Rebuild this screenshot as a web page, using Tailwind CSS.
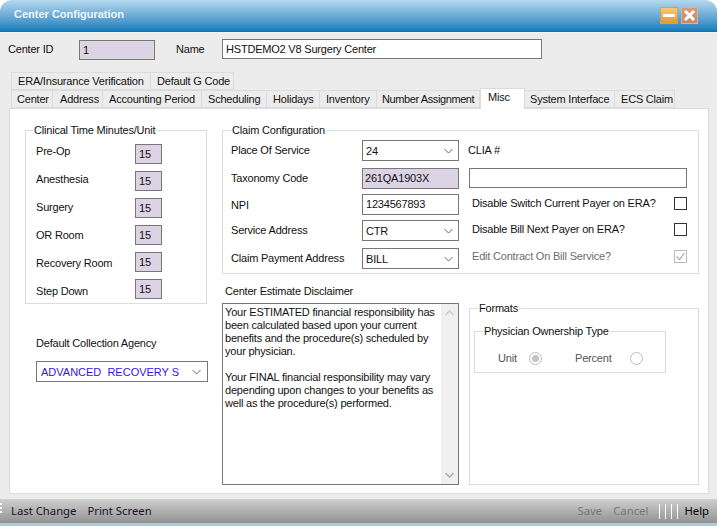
<!DOCTYPE html>
<html>
    <head>
        <meta charset="UTF-8" />
        <script src="https://cdn.jsdelivr.net/npm/@tailwindcss/browser@4"></script>
        <title>Center Configuration</title>
    </head>
    <body class="m-0 w-[718px] h-[526px] overflow-hidden bg-white font-['Liberation_Sans',sans-serif] text-[11px] tracking-[-0.2px] leading-[14px] text-[#111]">
        <div class="flex flex-col w-[717px] h-[526px] bg-[#ececec] rounded-t-[12px] overflow-hidden">
            <!-- title bar -->
            <div class="flex items-start justify-between h-[32px] bg-gradient-to-b from-[#b4d9ee] to-[#0b7dbd] border-b border-[#0a76b4] pl-[14px] pr-[19px] pt-[7px]">
                <span class="font-bold text-[11px] tracking-normal text-[#eef6fb]">Center Configuration</span>
                <div class="flex gap-[3px]">
                    <div class="flex items-center justify-center w-[18px] h-[17px] bg-gradient-to-b from-[#f5c878] to-[#e09a2c] border border-[#c9a468]">
                        <div class="w-[12px] h-[3px] bg-white"></div>
                    </div>
                    <div class="flex items-center justify-center w-[17px] h-[17px] bg-gradient-to-b from-[#d89a78] to-[#c98a62] border border-[#c8b8ac]">
                        <svg width="13" height="13" viewBox="0 0 13 13"><path d="M2 2 L11 11 M11 2 L2 11" stroke="#fff" stroke-width="3" fill="none" /></svg>
                    </div>
                </div>
            </div>

            <div class="flex-1 border-t border-[#f4f4f4]">
                <!-- id and name -->
                <div class="flex items-start h-[39px] pl-[8px] pt-[6px] whitespace-nowrap">
                    <span class="w-[71px] mt-[3px]">Center ID</span>
                    <div class="w-[76px] h-[20px] mt-[1px] pl-[3px] leading-[18px] bg-[#dcd4e4] border border-[#777] outline outline-1 -outline-offset-2 outline-[#ddd]">1</div>
                    <span class="ml-[21px] w-[46px] mt-[3px]">Name</span>
                    <div class="w-[320px] h-[20px] pl-[3px] leading-[18px] bg-white border border-[#777]">HSTDEMO2 V8 Surgery Center</div>
                </div>

                <!-- tabs -->
                <div class="flex ml-[11px] h-[18px] whitespace-nowrap">
                    <div class="w-[140px] border border-[#dcdcdc] pl-[6px] leading-[17px]">ERA/Insurance Verification</div>
                    <div class="w-[83px] border border-l-0 border-[#dcdcdc] pl-[6px] leading-[17px]">Default G Code</div>
                </div>
                <div class="relative z-10 flex items-end ml-[11px] h-[18px] whitespace-nowrap">
                    <div class="w-[42px] h-[18px] border border-[#dcdcdc] pl-[5px] leading-[17px]">Center</div>
                    <div class="w-[50px] h-[18px] border border-l-0 border-[#dcdcdc] pl-[7px] leading-[17px]">Address</div>
                    <div class="w-[99px] h-[18px] border border-l-0 border-[#dcdcdc] pl-[6px] leading-[17px]">Accounting Period</div>
                    <div class="w-[65px] h-[18px] border border-l-0 border-[#dcdcdc] pl-[6px] leading-[17px]">Scheduling</div>
                    <div class="w-[53px] h-[18px] border border-l-0 border-[#dcdcdc] pl-[6px] leading-[17px]">Holidays</div>
                    <div class="w-[57px] h-[18px] border border-l-0 border-[#dcdcdc] pl-[6px] leading-[17px]">Inventory</div>
                    <div class="w-[103px] h-[18px] border border-l-0 border-[#dcdcdc] pl-[5px] tracking-[-0.4px] leading-[17px]">Number Assignment</div>
                    <div class="w-[45px] h-[21px] -mb-[1px] border border-b-0 border-[#dcdcdc] bg-white pl-[7px] leading-[16px]">Misc</div>
                    <div class="w-[90px] h-[18px] border border-l-0 border-[#dcdcdc] pl-[5px] leading-[17px]">System Interface</div>
                    <div class="w-[60px] h-[18px] border border-l-0 border-[#dcdcdc] pl-[6px] leading-[17px]">ECS Claim</div>
                </div>

                <!-- tab panel -->
                <div class="flex ml-[9px] w-[700px] h-[386px] bg-white border border-[#dcdcdc] pl-[15px] pt-[21px]">
                    <!-- left column -->
                    <div class="w-[197px]">
                        <div class="relative flex w-[182px] h-[174px] border border-[#dcdcdc] pl-[10px] pt-[13px] whitespace-nowrap">
                            <span class="absolute -top-[8px] left-[7px] bg-white px-[1px]">Clinical Time Minutes/Unit</span>
                            <div class="flex flex-col gap-[14px] w-[99px]">
                                <span>Pre-Op</span>
                                <span>Anesthesia</span>
                                <span>Surgery</span>
                                <span>OR Room</span>
                                <span>Recovery Room</span>
                                <span>Step Down</span>
                            </div>
                            <div class="flex flex-col gap-[7px]">
                                <div class="w-[27px] h-[20px] pl-[3px] leading-[18px] bg-[#dcd4e4] border border-[#777]">15</div>
                                <div class="w-[27px] h-[20px] pl-[3px] leading-[18px] bg-[#dcd4e4] border border-[#777]">15</div>
                                <div class="w-[27px] h-[20px] pl-[3px] leading-[18px] bg-[#dcd4e4] border border-[#777]">15</div>
                                <div class="w-[27px] h-[20px] pl-[3px] leading-[18px] bg-[#dcd4e4] border border-[#777]">15</div>
                                <div class="w-[27px] h-[20px] pl-[3px] leading-[18px] bg-[#dcd4e4] border border-[#777]">15</div>
                                <div class="w-[27px] h-[20px] pl-[3px] leading-[18px] bg-[#dcd4e4] border border-[#777]">15</div>
                            </div>
                        </div>
                        <div class="ml-[11px] mt-[32px] whitespace-nowrap">Default Collection Agency</div>
                        <div class="flex items-center justify-between w-[172px] h-[21px] ml-[11px] mt-[11px] pl-[4px] pr-[6px] border border-[#777] text-[#3a10f0]">
                            <span class="tracking-normal whitespace-pre">ADVANCED  RECOVERY S</span>
                            <svg width="9" height="6" viewBox="0 0 9 6"><path d="M0.5 1 L4.5 5 L8.5 1" stroke="#666" fill="none" /></svg>
                        </div>
                    </div>

                    <!-- right column -->
                    <div class="w-[477px]">
                        <div class="relative flex w-[477px] h-[144px] border border-[#dcdcdc] pl-[8px] whitespace-nowrap">
                            <span class="absolute -top-[8px] left-[8px] bg-white px-[1px]">Claim Configuration</span>
                            <div class="flex flex-col w-[131px] pt-[12px]">
                                <span>Place Of Service</span>
                                <span class="mt-[14px]">Taxonomy Code</span>
                                <span class="mt-[13px]">NPI</span>
                                <span class="mt-[11px]">Service Address</span>
                                <span class="mt-[14px]">Claim Payment Address</span>
                            </div>
                            <div class="flex flex-col w-[106px] pt-[9px]">
                                <div class="flex items-center justify-between w-[97px] h-[21px] pl-[3px] pr-[5px] border border-[#777]">
                                    <span>24</span>
                                    <svg width="9" height="6" viewBox="0 0 9 6"><path d="M0.5 1 L4.5 5 L8.5 1" stroke="#666" fill="none" /></svg>
                                </div>
                                <div class="w-[97px] h-[21px] mt-[7px] pl-[2px] leading-[19px] bg-[#dcd4e4] border border-[#777]">261QA1903X</div>
                                <div class="w-[97px] h-[21px] mt-[5px] pl-[3px] leading-[18px] border border-[#777]">1234567893</div>
                                <div class="flex items-center justify-between w-[97px] h-[21px] mt-[5px] pl-[3px] pr-[5px] border border-[#777]">
                                    <span>CTR</span>
                                    <svg width="9" height="6" viewBox="0 0 9 6"><path d="M0.5 1 L4.5 5 L8.5 1" stroke="#666" fill="none" /></svg>
                                </div>
                                <div class="flex items-center justify-between w-[97px] h-[21px] mt-[7px] pl-[3px] pr-[5px] border border-[#777]">
                                    <span>BILL</span>
                                    <svg width="9" height="6" viewBox="0 0 9 6"><path d="M0.5 1 L4.5 5 L8.5 1" stroke="#666" fill="none" /></svg>
                                </div>
                            </div>
                            <div class="flex flex-col w-[219px] pt-[12px]">
                                <span>CLIA #</span>
                                <div class="w-[218px] h-[20px] ml-[1px] mt-[11px] border border-[#777]"></div>
                                <div class="flex items-center justify-between h-[14px] mt-[8px] ml-[4px]">
                                    <span>Disable Switch Current Payer on ERA?</span>
                                    <div class="w-[13px] h-[13px] border border-[#333]"></div>
                                </div>
                                <div class="flex items-center justify-between h-[14px] mt-[12px] ml-[4px]">
                                    <span>Disable Bill Next Payer on ERA?</span>
                                    <div class="w-[13px] h-[13px] border border-[#333]"></div>
                                </div>
                                <div class="flex items-center justify-between h-[14px] mt-[13px] ml-[4px] text-[#6d6d6d]">
                                    <span>Edit Contract On Bill Service?</span>
                                    <div class="flex items-center justify-center w-[13px] h-[13px] border border-[#bbb]">
                                        <svg width="11" height="11" viewBox="0 0 11 11"><path d="M1.5 5.5 L4.5 8.5 L9.5 2" stroke="#aaa" stroke-width="1.2" fill="none" /></svg>
                                    </div>
                                </div>
                            </div>
                        </div>

                        <div class="flex mt-[10px]">
                            <div class="w-[247px]">
                                <div class="ml-[3px] whitespace-nowrap">Center Estimate Disclaimer</div>
                                <div class="flex w-[237px] h-[182px] mt-[5px] border border-[#777]">
                                    <div class="w-[218px] pl-[2px] pt-[2px] leading-[13px]">
                                        <p>Your ESTIMATED financial responsibility has been calculated based upon your current benefits and the procedure(s) scheduled by your physician.</p>
                                        <p class="mt-[13px]">Your FINAL financial responsibility may vary depending upon changes to your benefits as well as the procedure(s) performed.</p>
                                    </div>
                                    <div class="flex-1 flex flex-col items-center justify-between pt-[6px] pb-[6px] bg-[#f0f0f0]">
                                        <svg width="9" height="6" viewBox="0 0 9 6"><path d="M0.5 5 L4.5 1 L8.5 5" stroke="#ccc" stroke-width="1.5" fill="none" /></svg>
                                        <svg width="9" height="6" viewBox="0 0 9 6"><path d="M0.5 1 L4.5 5 L8.5 1" stroke="#aaa" stroke-width="1.5" fill="none" /></svg>
                                    </div>
                                </div>
                            </div>
                            <div class="relative w-[230px] h-[177px] mt-[24px] border border-[#dcdcdc] pl-[4px] pt-[22px] whitespace-nowrap">
                                <span class="absolute -top-[8px] left-[8px] bg-white px-[1px]">Formats</span>
                                <div class="relative flex items-center w-[192px] h-[42px] border border-[#dcdcdc] pt-[12px] text-[#555]">
                                    <span class="absolute -top-[8px] left-[8px] bg-white px-[1px] text-[#111]">Physician Ownership Type</span>
                                    <span class="ml-[23px] w-[31px]">Unit</span>
                                    <div class="flex items-center justify-center w-[13px] h-[13px] rounded-full border border-[#bbb]">
                                        <div class="w-[7px] h-[7px] rounded-full bg-[#c4c4c4]"></div>
                                    </div>
                                    <span class="ml-[33px] w-[55px]">Percent</span>
                                    <div class="w-[13px] h-[13px] rounded-full border border-[#bbb]"></div>
                                </div>
                            </div>
                        </div>
                    </div>
                </div>
            </div>

            <!-- footer -->
            <div class="relative flex items-center justify-between h-[24px] bg-gradient-to-b from-[#d0d0d0] to-[#929292] font-['Noto_Sans',sans-serif] text-[11.3px] tracking-normal whitespace-nowrap pl-[11px] pr-[8px] text-[#22102a]">
                <div class="absolute left-0 top-[4px] flex flex-col gap-[2px]">
                    <div class="w-[2px] h-[2px] bg-white"></div>
                    <div class="w-[2px] h-[2px] bg-white"></div>
                    <div class="w-[2px] h-[2px] bg-white"></div>
                </div>
                <div class="flex gap-[11px]">
                    <span>Last Change</span>
                    <span>Print Screen</span>
                </div>
                <div class="flex items-center">
                    <span class="text-[#777]">Save</span>
                    <span class="ml-[11px] text-[#777]">Cancel</span>
                    <div class="flex gap-[5px] ml-[11px] h-[15px]">
                        <div class="w-[1px] bg-white"></div>
                        <div class="w-[1px] bg-white"></div>
                        <div class="w-[1px] bg-white"></div>
                        <div class="w-[1px] bg-white"></div>
                    </div>
                    <span class="ml-[6px] text-black">Help</span>
                </div>
            </div>
            <div class="h-[3px] bg-[#a9cde0]"></div>
        </div>
    </body>
</html>
